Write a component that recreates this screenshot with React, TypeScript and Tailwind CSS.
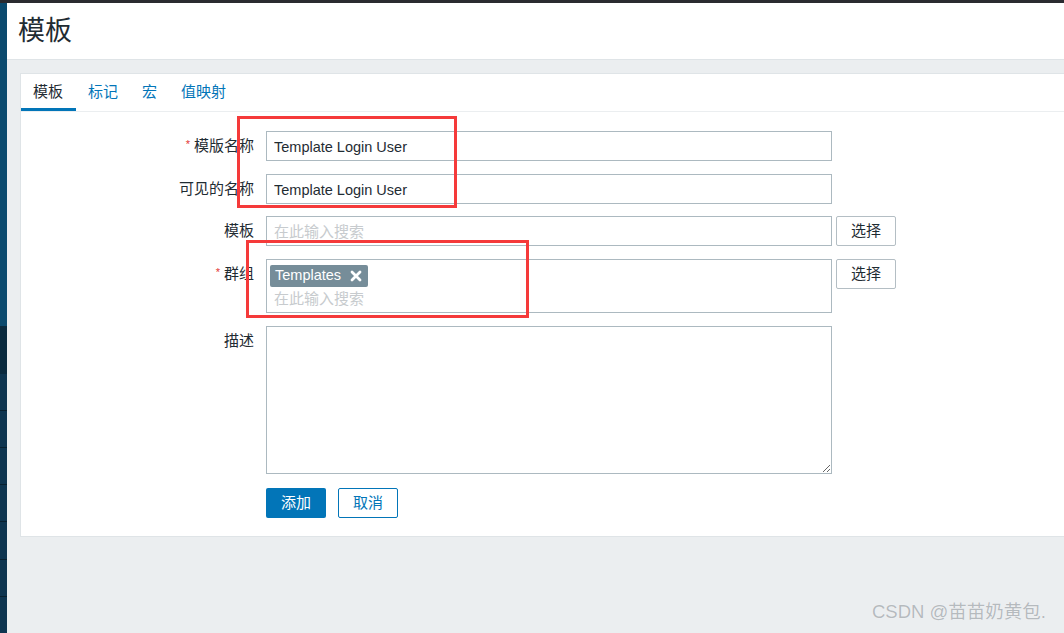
import React from 'react';

// Zabbix 风格的"新建模板"表单截图复刻

const FONT = '"Liberation Sans", "Noto Sans CJK SC", sans-serif';

const TABS = [
  { id: 'template', label: '模板', active: true },
  { id: 'tags', label: '标记' },
  { id: 'macros', label: '宏' },
  { id: 'valuemap', label: '值映射' },
];

function Label({ text, required }: { text: string; required?: boolean }) {
  return (
    <div className="flex h-[30px] w-[233px] shrink-0 items-center justify-end text-[15px] text-[#1f2c33]">
      {required && <span className="mr-[4px] -mt-[4px] text-[11px] text-[#e33734]">*</span>}
      {text}
    </div>
  );
}

function SelectButton() {
  return (
    <button className="ml-[4px] h-[30px] w-[60px] shrink-0 rounded-[2px] border border-[#b4bec4] bg-white text-[15px] text-[#1f2c33]">
      选择
    </button>
  );
}

function TextInput({ value, placeholder }: { value?: string; placeholder?: string }) {
  return (
    <input
      readOnly
      defaultValue={value}
      placeholder={placeholder}
      className="h-[30px] w-[566px] border border-[#acb9c0] bg-white pl-[7px] pt-[1px] text-[14.5px] text-[#1f2c33] outline-none placeholder:text-[15px] placeholder:text-[#c7cbce]"
    />
  );
}

function Sidebar() {
  const rows = [0, 1, 2, 3, 4, 5];
  return (
    <aside className="flex w-[7px] shrink-0 flex-col bg-[#0e3550]">
      <div className="h-[335px] bg-[#0b4a6e]" />
      <div className="h-[50px] bg-[#0a2a3e]" />
      <div className="h-[37px]" />
      {rows.map((r) => (
        <div key={r} className="h-[38.6px] border-t border-[#08202f]" />
      ))}
    </aside>
  );
}

export default function App() {
  return (
    <div className="relative h-[633px] w-[1064px] overflow-hidden bg-[#ebeef0]" style={{ fontFamily: FONT }}>
      <div className="h-[3px] bg-[#2a2b30]" />
      <div className="flex h-[630px]">
        <Sidebar />
        <main className="min-w-0 flex-1">
          <header className="flex h-[57px] items-center border-b border-[#dfe4e7] bg-white pl-[11px]">
            <h1 className="text-[27px] leading-none text-[#1f2c33]">模板</h1>
          </header>

          <div className="pl-[13px] pt-[13px]">
            <div className="border border-r-0 border-[#dfe4e7] bg-white">
              <nav className="flex h-[38px] border-b border-[#ebeef0]">
                {TABS.map((t) =>
                  t.active ? (
                    <div
                      key={t.id}
                      className="flex h-[37px] items-center border-b-[3px] border-[#0275b8] pl-[12px] pr-[13px] pt-[3px] text-[15px] text-[#1f2c33]"
                    >
                      {t.label}
                    </div>
                  ) : (
                    <div key={t.id} className="flex h-[37px] items-center px-[12px] text-[15px] text-[#0275b8]">
                      {t.label}
                    </div>
                  ),
                )}
              </nav>

              <form className="flex flex-col pb-[18px] pt-[19px]">
                <div className="flex gap-[12px]">
                  <Label text="模版名称" required />
                  <TextInput value="Template Login User" />
                </div>
                <div className="mt-[13px] flex gap-[12px]">
                  <Label text="可见的名称" />
                  <TextInput value="Template Login User" />
                </div>
                <div className="mt-[12px] flex gap-[12px]">
                  <Label text="模板" />
                  <div className="flex">
                    <TextInput placeholder="在此输入搜索" />
                    <SelectButton />
                  </div>
                </div>
                <div className="mt-[13px] flex gap-[12px]">
                  <Label text="群组" required />
                  <div className="flex">
                    <div className="h-[54px] w-[566px] border border-[#acb9c0] bg-white pl-[3px] pt-[3px]">
                      <span className="inline-flex h-[22px] items-center rounded-[2px] bg-[#768d99] pl-[5px] pr-[6px] text-[14.5px] text-white">
                        Templates
                        <svg viewBox="0 0 12 12" className="ml-[9px] h-[12px] w-[12px]">
                          <path d="M2 2 L10 10 M10 2 L2 10" stroke="white" strokeWidth="2.8" strokeLinecap="round" />
                        </svg>
                      </span>
                      <div className="pl-[4px] pt-[2px] text-[15px] leading-[20px] text-[#c7cbce]">在此输入搜索</div>
                    </div>
                    <SelectButton />
                  </div>
                </div>
                <div className="mt-[13px] flex gap-[12px]">
                  <Label text="描述" />
                  <textarea
                    readOnly
                    className="h-[148px] w-[566px] resize border border-[#acb9c0] bg-white outline-none"
                  />
                </div>
                <div className="ml-[245px] mt-[14px] flex gap-[12px]">
                  <button className="h-[30px] w-[60px] rounded-[2px] bg-[#0275b8] text-[15px] text-white">添加</button>
                  <button className="h-[30px] w-[60px] rounded-[2px] border border-[#0275b8] bg-white text-[15px] text-[#0275b8]">
                    取消
                  </button>
                </div>
              </form>
            </div>
          </div>
        </main>
      </div>

      {/* 标注用红框 */}
      <div className="pointer-events-none absolute left-[237px] top-[116px] h-[92px] w-[220px] border-[3px] border-[#f53a3a]" />
      <div className="pointer-events-none absolute left-[246px] top-[240px] h-[78px] w-[283px] border-[3px] border-[#f53a3a]" />

      {/* 水印 */}
      <div
        className="pointer-events-none absolute left-[872px] top-[600px] text-[18.5px] leading-[24px] text-[#b5babe]"
        style={{ textShadow: '0 0 1px #ffffff' }}
      >
        CSDN @苗苗奶黄包.
      </div>
    </div>
  );
}
